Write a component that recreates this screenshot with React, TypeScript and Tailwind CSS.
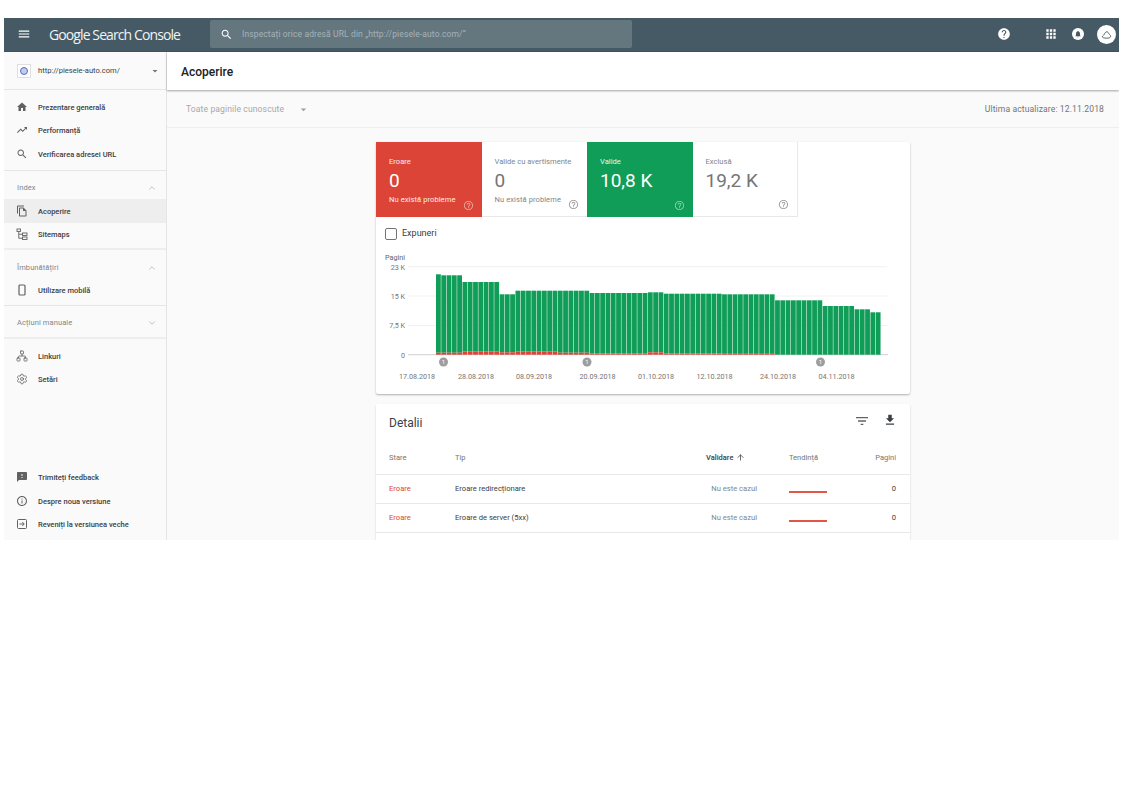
import type { ReactNode } from 'react';
import { ChevronDown, ChevronUp, Network, Settings, ArrowUp } from 'lucide-react';

const paths = {
  menu: 'M3 18h18v-2H3v2zm0-5h18v-2H3v2zm0-7v2h18V6H3z',
  search:
    'M15.5 14h-.79l-.28-.27C15.41 12.59 16 11.11 16 9.5 16 5.91 13.09 3 9.5 3S3 5.91 3 9.5 5.91 16 9.5 16c1.61 0 3.09-.59 4.23-1.57l.27.28v.79l5 4.99L20.49 19l-4.99-5zm-6 0C7.01 14 5 11.99 5 9.5S7.01 5 9.5 5 14 7.01 14 9.5 11.99 14 9.5 14z',
  help: 'M12 2C6.48 2 2 6.48 2 12s4.48 10 10 10 10-4.48 10-10S17.52 2 12 2zm1 17h-2v-2h2v2zm2.07-7.75l-.9.92C13.45 12.9 13 13.5 13 15h-2v-.5c0-1.1.45-2.1 1.17-2.83l1.24-1.26c.37-.36.59-.86.59-1.41 0-1.1-.9-2-2-2s-2 .9-2 2H8c0-2.21 1.79-4 4-4s4 1.79 4 4c0 .88-.36 1.68-.93 2.25z',
  helpOutline:
    'M11 18h2v-2h-2v2zm1-16C6.48 2 2 6.48 2 12s4.48 10 10 10 10-4.48 10-10S17.52 2 12 2zm0 18c-4.41 0-8-3.59-8-8s3.59-8 8-8 8 3.59 8 8-3.59 8-8 8zm0-14c-2.21 0-4 1.79-4 4h2c0-1.1.9-2 2-2s2 .9 2 2c0 2-3 1.75-3 5h2c0-2.25 3-2.5 3-5 0-2.21-1.79-4-4-4z',
  apps: 'M4 8h4V4H4v4zm6 12h4v-4h-4v4zm-6 0h4v-4H4v4zm0-6h4v-4H4v4zm6 0h4v-4h-4v4zm6-10v4h4V4h-4zm-6 4h4V4h-4v4zm6 6h4v-4h-4v4zm0 6h4v-4h-4v4z',
  home: 'M10 20v-6h4v6h5v-8h3L12 3 2 12h3v8z',
  trending: 'M16 6l2.29 2.29-4.88 4.88-4-4L2 16.59 3.41 18l6-6 4 4 6.3-6.29L22 12V6z',
  copy: 'M16 1H4c-1.1 0-2 .9-2 2v14h2V3h12V1zm-1 4H8c-1.1 0-1.99.9-1.99 2L6 21c0 1.1.89 2 1.99 2H19c1.1 0 2-.9 2-2V11l-6-6zM8 21V7h6v5h5v9H8z',
  feedback: 'M20 2H4c-1.1 0-1.99.9-1.99 2L2 22l4-4h14c1.1 0 2-.9 2-2V4c0-1.1-.9-2-2-2zm-7 12h-2v-2h2v2zm0-4h-2V6h2v4z',
  info: 'M11 7h2v2h-2zm0 4h2v6h-2zm1-9C6.48 2 2 6.48 2 12s4.48 10 10 10 10-4.48 10-10S17.52 2 12 2zm0 18c-4.41 0-8-3.59-8-8s3.59-8 8-8 8 3.59 8 8-3.59 8-8 8z',
  filter: 'M10 18h4v-2h-4v2zM3 6v2h18V6H3zm3 7h12v-2H6v2z',
  download: 'M19 9h-4V3H9v6H5l7 7 7-7zM5 18v2h14v-2H5z',
  caret: 'M7 10l5 5 5-5z',
};

function Icon({ d, className }: { d: string; className?: string }) {
  return (
    <svg viewBox="0 0 24 24" fill="currentColor" className={className}>
      <path d={d} />
    </svg>
  );
}

function SitemapIcon() {
  return (
    <svg viewBox="0 0 24 24" fill="none" stroke="currentColor" strokeWidth="1.8" className="w-[12px] h-[12px]">
      <rect x="2" y="2" width="7" height="5" />
      <rect x="13" y="10" width="9" height="5" />
      <rect x="13" y="18" width="9" height="5" />
      <path d="M5.5 7v13.5H13M5.5 12.5H13" />
    </svg>
  );
}

function PhoneIcon() {
  return (
    <svg viewBox="0 0 24 24" fill="none" stroke="currentColor" strokeWidth="2.4" className="w-[12px] h-[12px]">
      <rect x="6" y="2" width="12" height="20" rx="2" />
    </svg>
  );
}

function ExitIcon() {
  return (
    <svg viewBox="0 0 24 24" fill="none" stroke="currentColor" strokeWidth="2" className="w-[12px] h-[12px]">
      <rect x="3" y="3" width="18" height="18" rx="2" />
      <path d="M7 12h9M12.5 8l4 4-4 4" />
    </svg>
  );
}

function NavItem({ icon, label, active }: { icon: ReactNode; label: string; active?: boolean }) {
  return (
    <div className={`flex items-center h-[23.5px] pl-[12px] ${active ? 'bg-[#eeeeee]' : ''}`}>
      <span className="w-[22px] flex items-center text-[#616161]">{icon}</span>
      <span className="pt-[1px] text-[7.5px] font-medium text-[#3c4043]">{label}</span>
    </div>
  );
}

function SectionHead({ label, open, className }: { label: string; open: boolean; className: string }) {
  return (
    <div className={`flex items-center justify-between pl-[13px] pr-[9px] text-[#9e9e9e] ${className}`}>
      <span className="text-[7.5px] text-[#80868b] tracking-[0.1px]">{label}</span>
      {open ? <ChevronUp className="w-[10px] h-[10px]" strokeWidth={1.5} /> : <ChevronDown className="w-[10px] h-[10px]" strokeWidth={1.5} />}
    </div>
  );
}

function Sidebar() {
  const nav = 'w-[12px] h-[12px]';
  return (
    <aside className="w-[163px] shrink-0 flex flex-col border-r border-[#e5e5e5] bg-[#fafafa]">
      <div className="h-[38px] shrink-0 flex items-center pl-[13px] pr-[5px] border-b border-[#e6e6e6]">
        <span className="w-[14px] h-[14px] flex items-center justify-center bg-white border border-[#e0e0e0] mr-[7px]">
          <span className="block w-[8px] h-[8px] rounded-full border border-[#5c6bc0] bg-[#c5cae9]" />
        </span>
        <span className="text-[7.6px] text-[#3c4043] flex-1">http://piesele-auto.com/</span>
        <Icon d={paths.caret} className="w-[12px] h-[12px] text-[#757575]" />
      </div>

      <div className="pt-[5px] border-b border-[#e6e6e6] h-[81px] shrink-0">
        <NavItem icon={<Icon d={paths.home} className={nav} />} label="Prezentare generală" />
        <NavItem icon={<Icon d={paths.trending} className={nav} />} label="Performanță" />
        <NavItem icon={<Icon d={paths.search} className={nav} />} label="Verificarea adresei URL" />
      </div>

      <div className="border-b-2 border-[#eeeeee] h-[79px] shrink-0">
        <SectionHead label="Index" open className="h-[28px] pt-[5px]" />
        <NavItem active icon={<Icon d={paths.copy} className={nav} />} label="Acoperire" />
        <NavItem icon={<SitemapIcon />} label="Sitemaps" />
      </div>

      <div className="border-b border-[#e6e6e6] h-[56px] shrink-0">
        <SectionHead label="Îmbunătățiri" open className="h-[28px] pt-[7px]" />
        <NavItem icon={<PhoneIcon />} label="Utilizare mobilă" />
      </div>

      <div className="border-b-2 border-[#eeeeee] h-[33px] shrink-0">
        <SectionHead label="Acțiuni manuale" open={false} className="h-[32px] pt-[1px]" />
      </div>

      <div className="pt-[5px]">
        <NavItem icon={<Network className={nav} strokeWidth={1.6} />} label="Linkuri" />
        <NavItem icon={<Settings className={nav} strokeWidth={1.6} />} label="Setări" />
      </div>

      <div className="mt-auto pb-[4px]">
        <NavItem icon={<Icon d={paths.feedback} className={nav} />} label="Trimiteți feedback" />
        <NavItem icon={<Icon d={paths.info} className={nav} />} label="Despre noua versiune" />
        <NavItem icon={<ExitIcon />} label="Reveniți la versiunea veche" />
      </div>
    </aside>
  );
}

function Header() {
  return (
    <header className="h-[34px] shrink-0 flex items-center bg-[#455a64] pl-[13px] pr-[3px] pb-[1px] border-b border-[#3f535d]">
      <Icon d={paths.menu} className="w-[14px] h-[14px] text-white" />
      <div className="ml-[18px] w-[161px] text-[14px] text-[#f1f3f4] font-['Open_Sans',sans-serif] tracking-[-0.9px] whitespace-nowrap">
        <span className="font-medium">Google</span> Search Console
      </div>
      <div className="w-[422px] h-[28px] flex items-center rounded-[2px] bg-[#64777f] pl-[10px]">
        <Icon d={paths.search} className="w-[13px] h-[13px] text-white" />
        <span className="ml-[9px] text-[8.5px] text-[#a5b2b8] tracking-[0.12px]">Inspectați orice adresă URL din „http://piesele-auto.com/”</span>
      </div>
      <div className="ml-auto flex items-center text-white">
        <Icon d={paths.help} className="w-[14px] h-[14px]" />
        <Icon d={paths.apps} className="w-[14px] h-[14px] ml-[33px]" />
        <span className="ml-[14px] w-[12px] h-[12px] rounded-full bg-white flex items-center justify-center">
          <Icon
            d="M12 22c1.1 0 2-.9 2-2h-4c0 1.1.89 2 2 2zm6-6v-5c0-3.07-1.64-5.64-4.5-6.32V4c0-.83-.67-1.5-1.5-1.5s-1.5.67-1.5 1.5v.68C7.63 5.36 6 7.92 6 11v5l-2 2v1h16v-1l-2-2z"
            className="w-[8px] h-[8px] text-[#455a64]"
          />
        </span>
        <span className="ml-[13px] w-[19px] h-[19px] rounded-full bg-white flex items-center justify-center">
          <svg viewBox="0 0 24 24" fill="none" stroke="#455a64" strokeWidth="2" className="w-[11px] h-[11px]">
            <path d="M3 17c0-3 3-3 4-5 1-3 3-6 6-6 2 0 3 2 4 4 1 2 4 3 4 6 0 3-4 4-9 4s-9-1-9-3z" />
          </svg>
        </span>
      </div>
    </header>
  );
}

type TileProps = { label: string; value: string; className: string; labelClass: string; helpClass: string; sub?: string; subClass?: string };

function Tile({ label, value, sub, className, labelClass, helpClass, subClass }: TileProps) {
  return (
    <div className={`relative w-[105.5px] h-[75px] pl-[13px] pt-[15px] ${className}`}>
      <div className={`text-[7.6px] leading-[10px] ${labelClass}`}>{label}</div>
      <div className="text-[19px] leading-[24px] mt-[2px]">{value}</div>
      {sub && <div className={`text-[7.5px] leading-[10px] mt-[2px] tracking-[0.1px] ${subClass}`}>{sub}</div>}
      <Icon d={paths.helpOutline} className={`absolute right-[8px] bottom-[6px] w-[11px] h-[11px] ${helpClass}`} />
    </div>
  );
}

const segments = [
  { n: 1, top: 274.3, red: 2 },
  { n: 4, top: 275.3, red: 2 },
  { n: 7, top: 282, red: 3.3 },
  { n: 3, top: 294.3, red: 2.4 },
  { n: 8, top: 290.7, red: 3.3 },
  { n: 6, top: 290.7, red: 2 },
  { n: 11, top: 293, red: 1.3 },
  { n: 3, top: 292.3, red: 2.4 },
  { n: 11, top: 293.7, red: 1.3 },
  { n: 10, top: 294.3, red: 0.9 },
  { n: 9, top: 300.3, red: 0 },
  { n: 6, top: 306, red: 0 },
  { n: 3, top: 309.3, red: 0 },
  { n: 2, top: 312.3, red: 0 },
];
const bars = segments.flatMap((s) => Array.from({ length: s.n }, () => s));

const axis = [
  { y: 21.7, label: '23 K' },
  { y: 51, label: '15 K' },
  { y: 80.5, label: '7,5 K' },
];
const dates = [
  { x: 41, t: '17.08.2018' },
  { x: 100, t: '28.08.2018' },
  { x: 158, t: '08.09.2018' },
  { x: 221.5, t: '20.09.2018' },
  { x: 280, t: '01.10.2018' },
  { x: 338.5, t: '12.10.2018' },
  { x: 402, t: '24.10.2018' },
  { x: 460.5, t: '04.11.2018' },
];

// svg origin sits at page (376, 245)
function Chart() {
  const base = 109.7;
  return (
    <svg width="534" height="140" className="block font-['Roboto',sans-serif]">
      <text x="9" y="14.5" fontSize="7.2" fill="#5f6368">Pagini</text>
      {axis.map((a) => (
        <g key={a.label}>
          <line x1="32" x2="511" y1={a.y} y2={a.y} stroke="#f1f1f1" />
          <text x="29" y={a.y + 2.8} fontSize="7.2" textAnchor="end" fill="#757575">{a.label}</text>
        </g>
      ))}
      <text x="29" y={base + 2.8} fontSize="7.2" textAnchor="end" fill="#757575">0</text>
      <line x1="32" x2="512" y1={base} y2={base} stroke="#cfcfcf" />
      {bars.map((b, i) => {
        const x = 60 + i * 5.298;
        const top = b.top - 245;
        return (
          <g key={i}>
            <rect x={x} y={top} width="4.8" height={base - top - b.red} fill="#0f9d58" />
            {b.red > 0 && <rect x={x} y={base - b.red} width="4.8" height={b.red} fill="#db4437" />}
          </g>
        );
      })}
      {[67.5, 211, 444.5].map((x) => (
        <g key={x}>
          <circle cx={x} cy="117" r="4.5" fill="#9e9e9e" />
          <text x={x} y="119.2" fontSize="6" textAnchor="middle" fill="#fff">1</text>
        </g>
      ))}
      {dates.map((d) => (
        <text key={d.t} x={d.x} y="133.8" fontSize="7.2" textAnchor="middle" fill="#757575">{d.t}</text>
      ))}
    </svg>
  );
}

const rowGrid = 'grid grid-cols-[66px_251px_83px_47px_60px] items-center pl-[13px] pr-[14px] border-b border-[#e8e8e8]';

function ErrorRow({ type }: { type: string }) {
  return (
    <div className={`${rowGrid} h-[29px] text-[7.6px]`}>
      <span className="text-[#db4437]">Eroare</span>
      <span className="text-[#3c4043]">{type}</span>
      <span className="text-[#80868b] text-right pr-[32px]">Nu este cazul</span>
      <span className="block h-[2px] w-[38px] bg-[#e0574a] mt-[5px]" />
      <span className="text-right text-[#3c4043]">0</span>
    </div>
  );
}

export default function App() {
  return (
    <div className="min-h-[793px] bg-white pt-[18px] pl-[4px] pr-[3px] font-['Roboto',sans-serif]">
      <div className="h-[522px] flex flex-col overflow-hidden">
        <Header />
        <div className="flex flex-1 min-h-0">
          <Sidebar />
          <main className="flex-1 min-w-0 bg-[#fafafa] flex flex-col">
            <div className="h-[38px] shrink-0 flex items-center pl-[14px] pt-[1px] bg-white shadow-[0_1px_2px_rgba(0,0,0,0.35)] relative">
              <h1 className="text-[12px] font-medium text-[#202124]">Acoperire</h1>
            </div>
            <div className="h-[38px] shrink-0 flex items-center pl-[19px] pr-[15px] pt-[1px] border-b border-[#eeeeee]">
              <span className="text-[8.6px] text-[#a8a8a8] tracking-[0.1px]">Toate paginile cunoscute</span>
              <Icon d={paths.caret} className="ml-[13px] w-[13px] h-[13px] text-[#9e9e9e]" />
              <span className="ml-auto text-[8.6px] text-[#757575] tracking-[0.1px]">Ultima actualizare: 12.11.2018</span>
            </div>

            <div className="flex-1 min-h-0 overflow-hidden flex flex-col items-center pt-[14px] gap-[10px]">
              <section className="w-[534px] shrink-0 h-[252px] bg-white rounded-[2px] shadow-[0_1px_2px_rgba(0,0,0,0.3)]">
                <div className="flex">
                  <Tile className="bg-[#db4437] text-white" labelClass="text-white/90" subClass="text-white/90" helpClass="text-white/50" label="Eroare" value="0" sub="Nu există probleme" />
                  <Tile className="bg-white text-[#757575] border-b border-[#e8e8e8]" labelClass="text-[#80868b]" subClass="text-[#80868b]" helpClass="text-[#9e9e9e]" label="Valide cu avertismente" value="0" sub="Nu există probleme" />
                  <Tile className="bg-[#0f9d58] text-white" labelClass="text-white/90" helpClass="text-white/50" label="Valide" value="10,8 K" />
                  <Tile className="bg-white text-[#757575] border-b border-r border-[#e8e8e8]" labelClass="text-[#80868b]" helpClass="text-[#9e9e9e]" label="Exclusă" value="19,2 K" />
                </div>
                <div className="h-[28px] flex items-center pl-[9px] pt-[5px]">
                  <span className="w-[12px] h-[12px] rounded-[2px] border-[1.5px] border-[#757575]" />
                  <span className="ml-[5px] text-[9px] text-[#3c4043]">Expuneri</span>
                </div>
                <Chart />
              </section>

              <section className="w-[534px] shrink-0 bg-white rounded-[2px] shadow-[0_1px_2px_rgba(0,0,0,0.2)]">
                <div className="h-[38px] flex items-center pl-[13px] pr-[13px]">
                  <h2 className="text-[12px] text-[#3c4043]">Detalii</h2>
                  <Icon d={paths.filter} className="ml-auto -mt-[4px] w-[16px] h-[16px] text-[#5f6368]" />
                  <Icon d={paths.download} className="ml-[13px] -mt-[6px] w-[14px] h-[14px] text-[#3c4043]" />
                </div>
                <div className={`${rowGrid} h-[33px] pb-[1px] text-[7.5px] text-[#757575]`}>
                  <span>Stare</span>
                  <span>Tip</span>
                  <span className="flex items-center font-medium text-[#3c4043]">
                    Validare
                    <ArrowUp className="ml-[3px] w-[9px] h-[9px]" strokeWidth={2} />
                  </span>
                  <span>Tendință</span>
                  <span className="text-right">Pagini</span>
                </div>
                <ErrorRow type="Eroare redirecționare" />
                <ErrorRow type="Eroare de server (5xx)" />
                <div className="h-[29px]" />
              </section>
            </div>
          </main>
        </div>
      </div>
    </div>
  );
}
